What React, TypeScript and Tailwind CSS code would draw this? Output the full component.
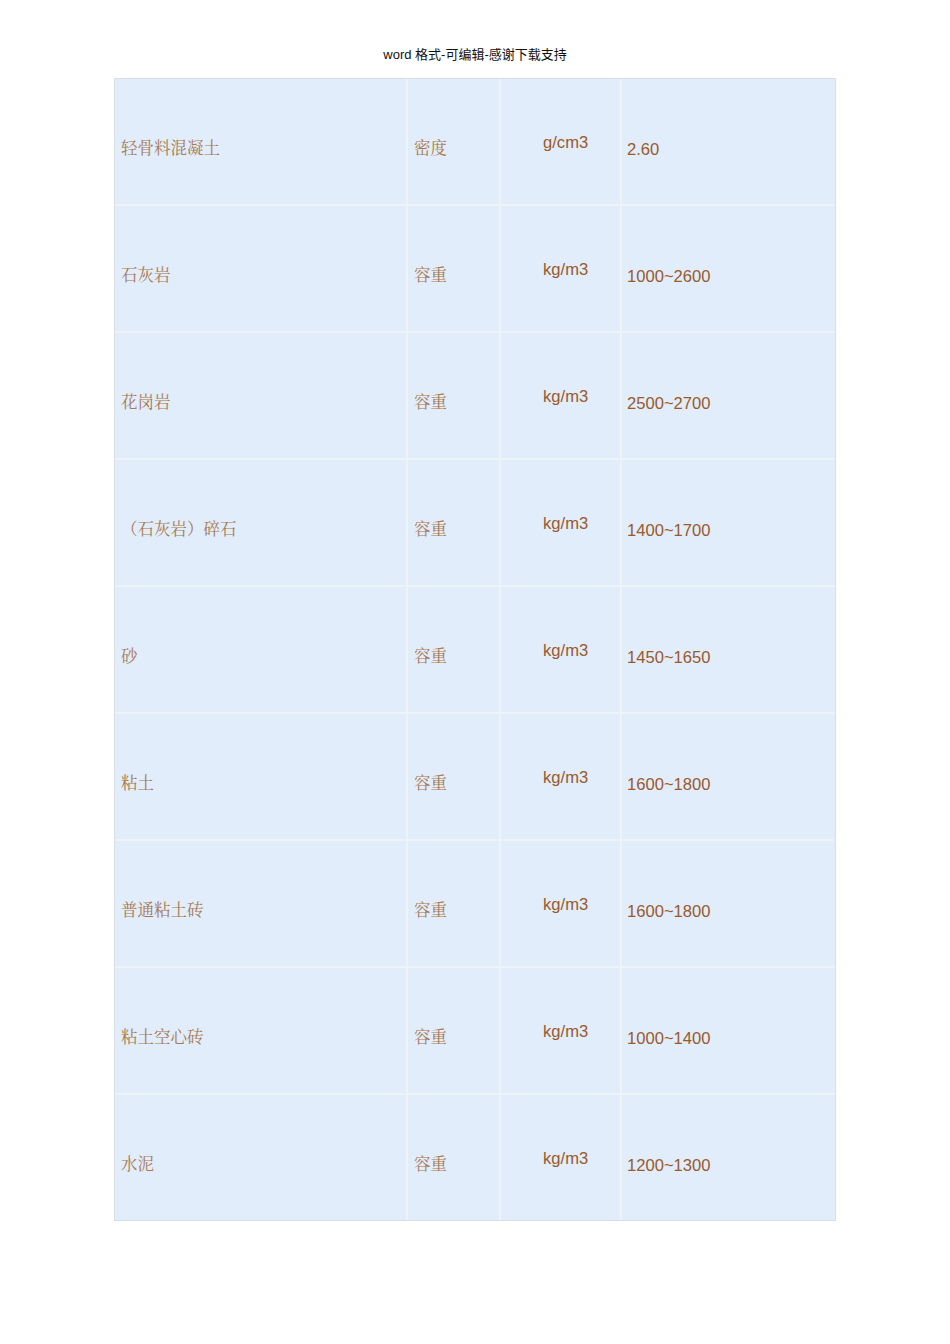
import React from "react";

const rows: [string, string, string, string][] = [
  ["轻骨料混凝土", "密度", "g/cm3", "2.60"],
  ["石灰岩", "容重", "kg/m3", "1000~2600"],
  ["花岗岩", "容重", "kg/m3", "2500~2700"],
  ["（石灰岩）碎石", "容重", "kg/m3", "1400~1700"],
  ["砂", "容重", "kg/m3", "1450~1650"],
  ["粘土", "容重", "kg/m3", "1600~1800"],
  ["普通粘土砖", "容重", "kg/m3", "1600~1800"],
  ["粘土空心砖", "容重", "kg/m3", "1000~1400"],
  ["水泥", "容重", "kg/m3", "1200~1300"],
];

const serifCell =
  "h-[125px] bg-[#e1edfb] pl-[6px] pt-[58px] text-[16.5px] leading-[20px] text-[#a8784f] font-['Noto_Serif_CJK_SC','Liberation_Serif','Noto_Sans_CJK_SC',serif]";
const sansCell =
  "h-[125px] bg-[#e1edfb] text-[16.6px] leading-[20px] text-[#9a5a2c] font-['Liberation_Sans',Arial,'Noto_Sans_CJK_SC',sans-serif]";

export default function App() {
  return (
    <div className="w-[950px] h-[1344px] bg-white">
      <div className="h-[78px] pt-[45px] text-center text-[13px] leading-[20px] text-[#111] font-['Liberation_Sans',Arial,'Noto_Sans_CJK_SC',sans-serif]">
        word 格式-可编辑-感谢下载支持
      </div>
      <div className="ml-[114px] w-[722px] border border-[#d9dee4] bg-[#eef3f8] grid grid-cols-[291px_91px_119px_213px] gap-[2px]">
        {rows.map((r, i) => (
          <React.Fragment key={i}>
            <div className={serifCell}>{r[0]}</div>
            <div className={serifCell}>{r[1]}</div>
            <div className={`${sansCell} pl-[42px] pt-[54px]`}>{r[2]}</div>
            <div className={`${sansCell} pl-[5px] pt-[61px]`}>{r[3]}</div>
          </React.Fragment>
        ))}
      </div>
    </div>
  );
}
